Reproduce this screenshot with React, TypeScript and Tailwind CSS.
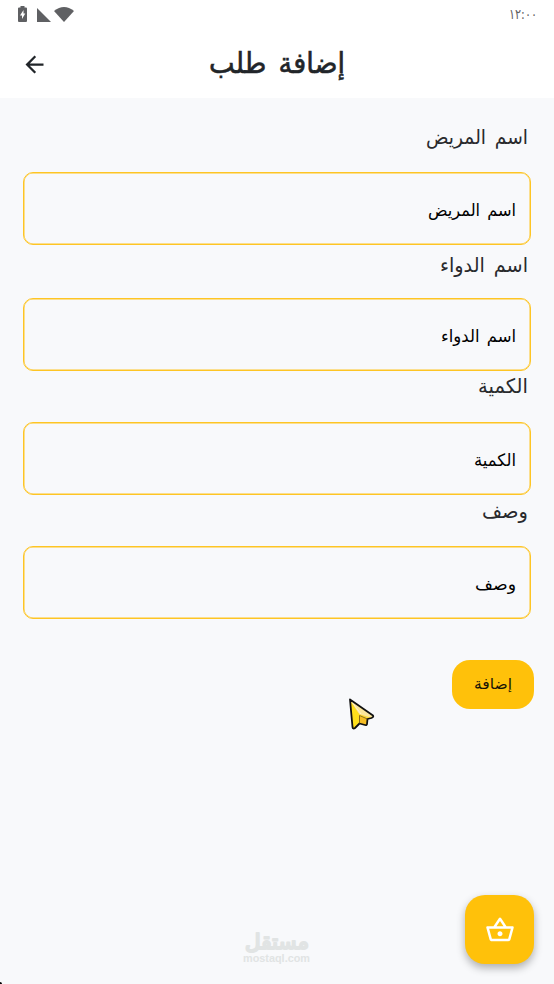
import { MdArrowBack, MdOutlineShoppingBasket } from "react-icons/md";

const fields = [
  { name: "اسم المريض", label: "h-[74px] pt-[24px]", width: 102, inner: 88 },
  { name: "اسم الدواء", label: "h-[53px] pt-[5px]", width: 88, inner: 75 },
  { name: "الكمية", label: "h-[51px] pt-[0px]", width: 50, inner: 42 },
  { name: "وصف", label: "h-[51px] pt-[1px]", width: 46, inner: 41 },
];

function Caption({ text, width, className }: { text: string; width: number; className: string }) {
  return (
    <svg width={width} height="32" className="block overflow-visible">
      <text x={width} y="22" direction="rtl" textLength={width} lengthAdjust="spacingAndGlyphs" className={className}>
        {text}
      </text>
    </svg>
  );
}

function StatusBar() {
  return (
    <div className="flex h-[30px] justify-between pl-[14px] pr-[17px] text-[#5f6063]">
      <div className="flex pt-[6px]">
        <svg width="9" height="16" viewBox="0 0 9 16" className="ml-[4px]" fill="currentColor">
          <path d="M2.500 0h4v1.500H8q1 0 1 1V15q0 1-1 1H1q-1 0-1-1V2.500q0-1 1-1h1.500z" />
          <path d="M5.500 4 2 9.500h2V13l3.300-5.500H5.500z" fill="#fff" />
        </svg>
        <svg width="14" height="14" viewBox="0 0 14 14" className="mt-[2px] ml-[10px]" fill="currentColor">
          <path d="M0 0v14h14z" />
        </svg>
        <svg width="20" height="15" viewBox="0 0 20 15" className="mt-px ml-[3px]" fill="currentColor">
          <path d="M0 4Q10-4 20 4L10 15z" />
        </svg>
      </div>
      <svg width="28" height="20" className="mt-[5px] overflow-visible">
        <text x="28" y="14" direction="rtl" textLength="28" lengthAdjust="spacingAndGlyphs" className="fill-[#5f6063] text-[14px]">١٢:٠٠</text>
      </svg>
    </div>
  );
}

function Cursor() {
  return (
    <svg width="30" height="34" viewBox="0 0 30 34" className="absolute left-[347px] top-[697px]">
      <path d="M3 2.500 26 18.500 25 21 20.500 22 20 28 12 26 7.500 31.500 5.500 31z" fill="#fdd938" />
      <path d="M3 2.500 26 18.500 25 21 12 17z" fill="#fbe69b" />
      <path d="M4 6 12 17 11.500 26 7.500 31 5.500 30z" fill="#ffe01b" />
      <path d="M12 19 20 22 19 28 12 26z" fill="#f5bd24" />
      <path d="M4 4 14 17" fill="none" stroke="#fff4c8" strokeWidth="1" />
      <path d="M3 2.500 26 18.500Q27 20 24.500 21L20.500 22 20 27Q20 28.500 18 28L12.500 26.500 8 31Q6 32.500 5.500 30z" fill="none" stroke="#111" strokeWidth="1.800" strokeLinejoin="round" />
      <path d="M12.500 26.500V18.500L20.500 22" fill="none" stroke="#6b5212" strokeWidth="0.800" />
    </svg>
  );
}

export default function App() {
  return (
    <div className="relative h-[984px] w-[554px] overflow-hidden bg-[#f8f9fb] font-['DejaVu_Sans',sans-serif] text-[#212529]">
      <header className="h-[98px] bg-white">
        <StatusBar />
        <div className="flex h-[68px] items-center">
          <MdArrowBack className="ml-[21px] size-[27px]" />
          <div className="mt-[5px] ml-[161px]">
            <Caption text="إضافة طلب" width={136} className="fill-[#212529] stroke-[#212529] stroke-[0.6px] text-[29px] [word-spacing:4px]" />
          </div>
        </div>
      </header>
      <main>
        {fields.map((item, key) => (
          <div key={key}>
            <div className={"flex justify-end pr-[26px] " + item.label}>
              <Caption text={item.name} width={item.width} className="fill-[#292a2d] text-[20px] [word-spacing:3px]" />
            </div>
            <div className="mx-[23px] flex h-[73px] items-center justify-end rounded-[10px] border border-[#fec524] pt-[2px] pr-[14px] shadow-[inset_0_0_0_0.5px_#fec524]">
              <Caption text={item.name} width={item.inner} className="fill-black text-[17px] [word-spacing:2px]" />
            </div>
          </div>
        ))}
        <button className="mt-[41px] ml-[452px] flex h-[49px] w-[82px] items-center justify-center rounded-[18px] bg-[#ffc10a] pb-[3px]">
          <Caption text="إضافة" width={38} className="fill-[#171307] text-[15px]" />
        </button>
      </main>
      <Cursor />
      <button className="absolute left-[465px] top-[895px] flex h-[69px] w-[69px] items-center justify-center rounded-[20px] bg-[#ffc10a] text-white shadow-[0_4px_8px_rgba(0,0,0,0.3)]">
        <MdOutlineShoppingBasket className="size-[30px]" />
      </button>
      <svg width="68" height="36" className="absolute left-[243px] top-[931px] overflow-visible">
        <text x="66" y="18" direction="rtl" textLength="64" lengthAdjust="spacingAndGlyphs" strokeLinejoin="round" className="fill-[#e1e4e4] stroke-[#e1e4e4] stroke-2 text-[21px]">مستقل</text>
        <text x="0" y="31" textLength="67" lengthAdjust="spacingAndGlyphs" className="fill-[#e1e4e4] font-['Liberation_Sans',sans-serif] text-[11px] font-bold">mostaql.com</text>
      </svg>
      <div className="absolute bottom-0 left-0 size-[2px] rounded-tr-full bg-black" />
    </div>
  );
}
